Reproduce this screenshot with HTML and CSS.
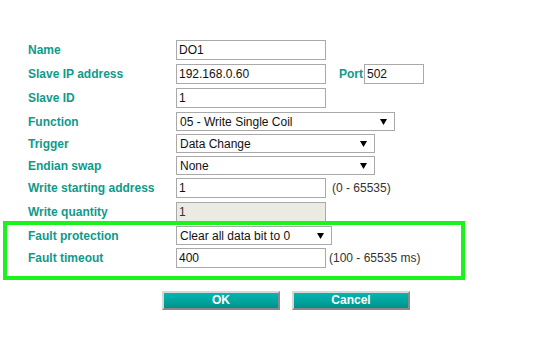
FILE: index.html
```html
<!DOCTYPE html>
<html>
<head>
<meta charset="utf-8">
<link rel="stylesheet" href="styles.css">
</head>
<body>
<div class="page">
  <form class="form">
    <div class="row row-in">
      <label class="lbl">Name</label>
      <input class="txt" type="text" value="DO1">
    </div>
    <div class="row row-in">
      <label class="lbl">Slave IP address</label>
      <input class="txt" type="text" value="192.168.0.60">
      <span class="lbl port">Port</span>
      <input class="txt txt-port" type="text" value="502">
    </div>
    <div class="row row-in">
      <label class="lbl">Slave ID</label>
      <input class="txt" type="text" value="1">
    </div>
    <div class="row row-sel">
      <label class="lbl">Function</label>
      <div class="sel sel-func"><select><option>05 - Write Single Coil</option></select><svg class="arr" width="7" height="6" viewBox="0 0 7 6"><path d="M0 0H7L3.5 6Z" fill="#000"/></svg></div>
    </div>
    <div class="row row-sel">
      <label class="lbl">Trigger</label>
      <div class="sel sel-wide"><select><option>Data Change</option></select><svg class="arr" width="7" height="6" viewBox="0 0 7 6"><path d="M0 0H7L3.5 6Z" fill="#000"/></svg></div>
    </div>
    <div class="row row-sel">
      <label class="lbl">Endian swap</label>
      <div class="sel sel-wide"><select><option>None</option></select><svg class="arr" width="7" height="6" viewBox="0 0 7 6"><path d="M0 0H7L3.5 6Z" fill="#000"/></svg></div>
    </div>
    <div class="row row-in">
      <label class="lbl">Write starting address</label>
      <input class="txt" type="text" value="1">
      <span class="hint">(0 - 65535)</span>
    </div>
    <div class="row row-in">
      <label class="lbl">Write quantity</label>
      <input class="txt" type="text" value="1" disabled>
    </div>
    <div class="row row-sel">
      <label class="lbl">Fault protection</label>
      <div class="sel sel-fault"><select><option>Clear all data bit to 0</option></select><svg class="arr" width="7" height="6" viewBox="0 0 7 6"><path d="M0 0H7L3.5 6Z" fill="#000"/></svg></div>
    </div>
    <div class="row row-in">
      <label class="lbl">Fault timeout</label>
      <input class="txt" type="text" value="400">
      <span class="hint hint-near">(100 - 65535 ms)</span>
    </div>
    <div class="buttons">
      <button class="btn" type="button">OK</button>
      <button class="btn" type="button">Cancel</button>
    </div>
  </form>
  <div class="highlight"></div>
</div>
</body>
</html>
```

FILE: styles.css
```css
html, body {
  margin: 0;
  padding: 0;
  background: #fff;
}
body {
  font-family: "Liberation Sans", Arial, sans-serif;
  font-size: 12px;
}
.page {
  position: relative;
  width: 542px;
  height: 356px;
}
.form {
  padding: 40px 0 0 27px;
  margin: 0;
}
.row {
  display: flex;
  align-items: flex-start;
}
.row-in { height: 24px; }
.row-sel { height: 22px; }
.lbl {
  width: 149px;
  flex: none;
  font-weight: bold;
  color: #0e9a8b;
  font-size: 12px;
  line-height: 20px;
  padding-left: 1px;
  box-sizing: border-box;
}
.txt {
  box-sizing: border-box;
  width: 150px;
  height: 20px;
  margin: 0;
  padding: 0 2px;
  border: 1px solid #a9a9a9;
  font-family: "Liberation Sans", Arial, sans-serif;
  font-size: 12px;
  color: #111;
  background: #fff;
}
.txt:disabled {
  background: #ebebe4;
  color: #333;
}
.port {
  width: auto;
  padding-left: 0;
  margin-left: 13px;
  margin-right: 1px;
}
.txt-port {
  width: 60px;
}
.hint {
  margin-left: 6px;
  line-height: 20px;
  color: #333;
}
.hint-near {
  margin-left: 3px;
}
.sel {
  position: relative;
  height: 19px;
}
.sel select {
  -webkit-appearance: none;
  appearance: none;
  box-sizing: border-box;
  width: 100%;
  height: 19px;
  margin: 0;
  padding: 0 0 0 3px;
  border: 1px solid #a9a9a9;
  border-radius: 0;
  background: #fff;
  font-family: "Liberation Sans", Arial, sans-serif;
  font-size: 12px;
  color: #111;
}
.sel .arr {
  position: absolute;
  right: 8px;
  top: 7px;
  pointer-events: none;
}
.sel-func { width: 219px; }
.sel-wide { width: 199px; }
.sel-fault { width: 156px; }
.buttons {
  display: flex;
  gap: 12px;
  margin: 19px 0 0 135px;
}
.btn {
  box-sizing: border-box;
  width: 118px;
  height: 19px;
  margin: 0;
  padding: 0;
  border: 2px solid;
  border-color: #d8d8d8 #8a8a8a #8a8a8a #d8d8d8;
  background: linear-gradient(#00b6af, #00a39c 60%, #008f89);
  color: #fff;
  font-family: "Liberation Sans", Arial, sans-serif;
  font-size: 12px;
  font-weight: bold;
  line-height: 15px;
}
.highlight {
  position: absolute;
  left: 3px;
  top: 221px;
  width: 462px;
  height: 59px;
  box-sizing: border-box;
  border: 4px solid #1cf21c;
  pointer-events: none;
}
```
